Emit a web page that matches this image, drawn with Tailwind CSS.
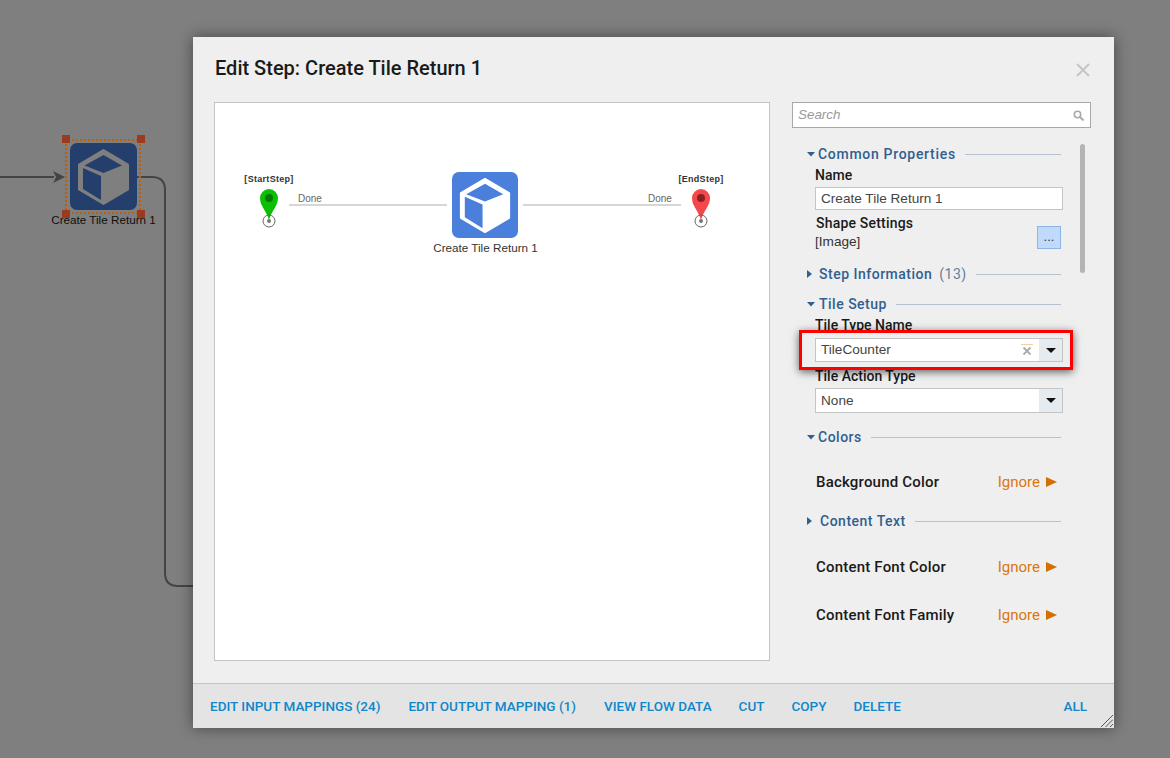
<!DOCTYPE html>
<html lang="en">
  <head>
    <meta charset="UTF-8" />
    <title>Edit Step: Create Tile Return 1</title>
    <script src="https://cdn.jsdelivr.net/npm/@tailwindcss/browser@4"></script>
  </head>
  <body class="relative w-[1170px] h-[758px] overflow-hidden bg-white font-['Roboto',sans-serif]">
    <svg class="hidden">
      <symbol id="cube" viewBox="0 0 67 67">
        <rect width="67" height="67" rx="7" fill="currentColor" />
        <path d="M33.500 7 58 21.500v25L33.500 61 9 46.500v-25z" fill="#fff" stroke="#fff" stroke-width="2" stroke-linejoin="round" />
        <path d="M33.500 12 52 22.500 33.500 30 14.500 22.500z" fill="currentColor" />
        <path d="M13 25 31 33v24L13 46z" fill="currentColor" />
      </symbol>
    </svg>

    <!-- flow canvas behind the dialog -->
    <svg class="absolute left-0 top-0" width="200" height="600" fill="none">
      <path d="M0 177H54" stroke="#888" stroke-width="2" />
      <path d="M53 171 65 177 53 183 56 177z" fill="#888" />
      <path d="M137 177H152Q165 177 165 190V573Q165 586 178 586H200" stroke="#888" stroke-width="2" />
    </svg>
    <svg class="absolute left-[70px] top-[143px] w-[67px] h-[67px] text-[#4a7fdb]"><use href="#cube" /></svg>
    <div class="absolute left-[43px] top-[212px] w-[121px] text-center text-[11.7px] leading-[16px] text-[#222] font-['Liberation_Sans',sans-serif]">Create Tile Return 1</div>
    <div class="absolute inset-0 bg-black/50"></div>
    <div class="absolute left-[65px] top-[139px] w-[76px] h-[75px] border-2 border-dotted border-[#b8600c]"></div>
    <div class="absolute left-[62px] top-[135px] w-[8px] h-[8px] bg-[#9c3a20]"></div>
    <div class="absolute left-[137px] top-[135px] w-[8px] h-[8px] bg-[#9c3a20]"></div>
    <div class="absolute left-[62px] top-[210px] w-[8px] h-[8px] bg-[#9c3a20]"></div>
    <div class="absolute left-[137px] top-[210px] w-[8px] h-[8px] bg-[#9c3a20]"></div>

    <!-- dialog -->
    <div class="absolute left-[193px] top-[37px] w-[921px] h-[691px] flex flex-col bg-[#efefef] shadow-[0_0_14px_rgba(0,0,0,0.45)]">
      <div class="relative h-[65px] shrink-0 pl-[22px] pt-[18px] text-[20px] leading-[26px] font-medium text-[#1a1a1a]">
        Edit Step: Create Tile Return 1
        <svg class="absolute left-[883px] top-[26px]" width="14" height="14" fill="none" stroke="#c6c6c6" stroke-width="2"><path d="M1 1 13 13M13 1 1 13" /></svg>
      </div>

      <div class="flex-1 flex pl-[21px]">
        <!-- diagram preview -->
        <div class="relative w-[556px] h-[559px] bg-white border border-[#c4c4c4] font-['Liberation_Sans',sans-serif]">
          <div class="absolute left-[14px] top-[70px] w-[80px] text-center text-[9px] leading-[12px] tracking-[0.3px] font-bold text-[#333]">[StartStep]</div>
          <svg class="absolute left-[40px] top-[85px]" width="28" height="42" fill="none">
            <path d="M14 32C11 22 5 18 5 10a9 9 0 0 1 18 0C23 18 17 22 14 32z" fill="#0bbf06" />
            <circle cx="14" cy="10" r="4" fill="#067a04" />
            <circle cx="14" cy="33" r="6" stroke="#666" />
            <circle cx="14" cy="33" r="2" fill="#777" />
          </svg>
          <div class="absolute left-[83px] top-[89px] text-[10px] leading-[14px] text-[#666]">Done</div>
          <div class="absolute left-[74px] top-[101px] w-[158px] h-[2px] bg-[#d6d6d6]"></div>
          <svg class="absolute left-[237px] top-[69px] w-[66px] h-[66px] text-[#4a7fdb]"><use href="#cube" /></svg>
          <div class="absolute left-[200px] top-[137px] w-[141px] text-center text-[11.7px] leading-[16px] text-[#333]">Create Tile Return 1</div>
          <div class="absolute left-[308px] top-[101px] w-[158px] h-[2px] bg-[#d6d6d6]"></div>
          <div class="absolute left-[433px] top-[89px] text-[10px] leading-[14px] text-[#666]">Done</div>
          <div class="absolute left-[446px] top-[70px] w-[80px] text-center text-[9px] leading-[12px] tracking-[0.3px] font-bold text-[#333]">[EndStep]</div>
          <svg class="absolute left-[472px] top-[85px]" width="28" height="42" fill="none">
            <path d="M14 32C11 22 5 18 5 10a9 9 0 0 1 18 0C23 18 17 22 14 32z" fill="#f4484a" />
            <circle cx="14" cy="10" r="4" fill="#8a2024" />
            <circle cx="14" cy="33" r="6" stroke="#666" />
            <circle cx="14" cy="33" r="2" fill="#777" />
          </svg>
        </div>

        <!-- properties panel -->
        <div class="relative ml-[22px] w-[299px] flex flex-col">
          <div class="relative h-[26px] bg-white border border-[#a8a8a8] pl-[5px] text-[13.4px] leading-[24px] italic text-[#999] font-['Liberation_Sans',sans-serif]">
            Search
            <svg class="absolute right-[6px] top-[7px]" width="11" height="11" fill="none" stroke="#aaa"><circle cx="4.500" cy="4.500" r="3.200" stroke-width="1.600" /><path d="M7 7 10.500 10.500" stroke-width="2" /></svg>
          </div>
          <div class="absolute left-[288px] top-[42px] w-[5px] h-[129px] rounded-[3px] bg-[#b4b4b4]"></div>

          <div class="mt-[16px] h-[20px] flex items-center pl-[15px] w-[269px] text-[14px] font-medium tracking-[0.7px] text-[#31608f]">
            <svg class="mr-[3px]" width="8" height="6" fill="#31608f"><path d="M0 1H8L4 5.500z" /></svg>
            <span>Common Properties</span>
            <div class="flex-1 ml-[9px] h-[1px] bg-[#b4c2d2]"></div>
          </div>
          <div class="mt-[1px] h-[20px] pl-[23px] text-[14px] leading-[20px] font-medium text-[#1a1a1a]">Name</div>
          <div class="ml-[23px] mt-[2px] w-[248px] h-[23px] bg-white border border-[#c4c4c4] pl-[5px] text-[13.6px] leading-[21px] text-[#444] font-['Liberation_Sans',sans-serif]">Create Tile Return 1</div>
          <div class="mt-[3px] h-[36px] flex items-end justify-between pl-[24px] w-[269px]">
            <div>
              <div class="h-[20px] text-[14px] leading-[20px] font-medium tracking-[0.2px] text-[#1a1a1a]">Shape Settings</div>
              <div class="-ml-[1px] h-[16px] text-[13.6px] leading-[18px] text-[#333] font-['Liberation_Sans',sans-serif]">[Image]</div>
            </div>
            <div class="w-[24px] h-[23px] bg-[#bfdafc] border border-[#8db5e6] text-center text-[14px] leading-[18px] text-[#345]">...</div>
          </div>

          <div class="mt-[15px] h-[20px] flex items-center pl-[15px] w-[269px] text-[14px] font-medium tracking-[0.5px] text-[#31608f]">
            <svg class="mr-[7px]" width="5" height="8" fill="#31608f"><path d="M0 0 5 4 0 8z" /></svg>
            <span>Step Information</span>
            <span class="ml-[7px] font-normal text-[#5f7f9f]">(13)</span>
            <div class="flex-1 ml-[9px] h-[1px] bg-[#b4c2d2]"></div>
          </div>
          <div class="mt-[10px] h-[20px] flex items-center pl-[15px] w-[269px] text-[14px] font-medium tracking-[0.5px] text-[#31608f]">
            <svg class="mr-[4px]" width="8" height="6" fill="#31608f"><path d="M0 1H8L4 5.500z" /></svg>
            <span>Tile Setup</span>
            <div class="flex-1 ml-[9px] h-[1px] bg-[#b4c2d2]"></div>
          </div>
          <div class="mt-[1px] h-[20px] pl-[23px] text-[14px] leading-[20px] font-medium text-[#1a1a1a]">Tile Type Name</div>
          <div class="relative ml-[23px] mt-[3px] w-[248px] h-[24px] flex bg-white border border-[#c4c4c4] text-[13.6px] leading-[21px] text-[#444] font-['Liberation_Sans',sans-serif]">
            <div class="flex-1 pl-[5px]">TileCounter</div>
            <svg class="absolute right-[29px] top-[5px]" width="12" height="12" fill="none"><path d="M0 .5H12" stroke="#f3cfa0" /><path d="M2.500 3.500 9.500 10.500M9.500 3.500 2.500 10.500" stroke="#aaa" stroke-width="1.800" /></svg>
            <div class="w-[23px] flex items-center justify-center bg-[#e6ebef]"><svg width="10" height="5" fill="#111"><path d="M0 0H10L5 5z" /></svg></div>
          </div>
          <div class="mt-[4px] h-[20px] pl-[23px] text-[14px] leading-[20px] font-medium text-[#1a1a1a]">Tile Action Type</div>
          <div class="ml-[23px] mt-[2px] w-[248px] h-[25px] flex bg-white border border-[#c4c4c4] text-[13.6px] leading-[23px] text-[#444] font-['Liberation_Sans',sans-serif]">
            <div class="flex-1 pl-[5px]">None</div>
            <div class="w-[23px] flex items-center justify-center bg-[#e6ebef]"><svg width="10" height="5" fill="#111"><path d="M0 0H10L5 5z" /></svg></div>
          </div>
          <div class="mt-[14px] h-[20px] flex items-center pl-[15px] w-[269px] text-[14px] font-medium tracking-[0.5px] text-[#31608f]">
            <svg class="mr-[3px]" width="8" height="6" fill="#31608f"><path d="M0 1H8L4 5.500z" /></svg>
            <span>Colors</span>
            <div class="flex-1 ml-[9px] h-[1px] bg-[#b4c2d2]"></div>
          </div>
          <div class="mt-[25px] h-[20px] flex justify-between pl-[24px] pr-[34px] text-[15px] leading-[20px]">
            <span class="font-medium tracking-[0.2px] text-[#1a1a1a]">Background Color</span>
            <span class="flex items-center text-[#d9770f]">Ignore<svg class="ml-[6px]" width="11" height="10" fill="#d26f00"><path d="M0 0 11 5 0 10z" /></svg></span>
          </div>
          <div class="mt-[19px] h-[20px] flex items-center pl-[15px] w-[269px] text-[14px] font-medium tracking-[0.5px] text-[#31608f]">
            <svg class="mr-[8px]" width="5" height="8" fill="#31608f"><path d="M0 0 5 4 0 8z" /></svg>
            <span>Content Text</span>
            <div class="flex-1 ml-[9px] h-[1px] bg-[#b4c2d2]"></div>
          </div>
          <div class="mt-[26px] h-[20px] flex justify-between pl-[24px] pr-[34px] text-[15px] leading-[20px]">
            <span class="font-medium tracking-[0.2px] text-[#1a1a1a]">Content Font Color</span>
            <span class="flex items-center text-[#d9770f]">Ignore<svg class="ml-[6px]" width="11" height="10" fill="#d26f00"><path d="M0 0 11 5 0 10z" /></svg></span>
          </div>
          <div class="mt-[28px] h-[20px] flex justify-between pl-[24px] pr-[34px] text-[15px] leading-[20px]">
            <span class="font-medium tracking-[0.2px] text-[#1a1a1a]">Content Font Family</span>
            <span class="flex items-center text-[#d9770f]">Ignore<svg class="ml-[6px]" width="11" height="10" fill="#d26f00"><path d="M0 0 11 5 0 10z" /></svg></span>
          </div>

          <!-- callout drawn over the Tile Type Name field -->
          <div class="absolute left-[7px] top-[228px] w-[274px] h-[40px] border-[3px] border-[#f00] shadow-[0_2px_8px_rgba(0,0,0,0.6)]"></div>
        </div>
      </div>

      <div class="relative h-[45px] shrink-0 flex items-center gap-[27px] pl-[17px] pr-[27px] bg-[#e4e4e4] border-t border-[#c4c4c4] text-[13.5px] font-medium text-[#0f87c9]">
        <span>EDIT INPUT MAPPINGS (24)</span>
        <span class="ml-px">EDIT OUTPUT MAPPING (1)</span>
        <span class="ml-px">VIEW FLOW DATA</span>
        <span>CUT</span>
        <span>COPY</span>
        <span>DELETE</span>
        <span class="ml-auto">ALL</span>
        <svg class="absolute right-[1px] bottom-[1px]" width="12" height="12" fill="none" stroke="#555"><path d="M0 12 12 0M4.500 12 12 4.500M9 12 12 9" /></svg>
      </div>
    </div>
  </body>
</html>
